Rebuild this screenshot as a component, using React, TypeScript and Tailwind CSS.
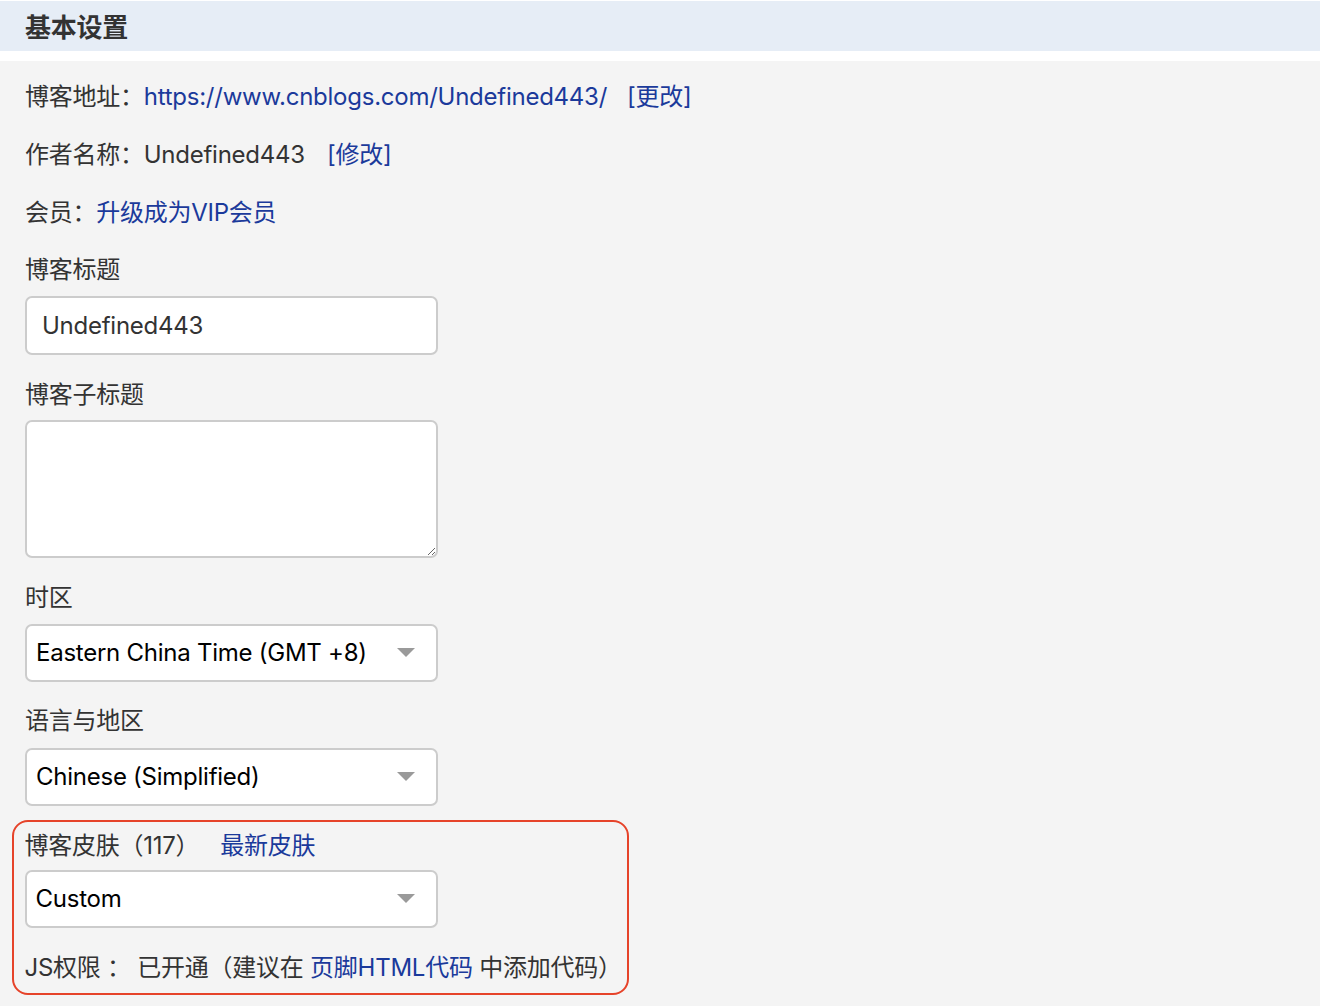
import React from "react";

const linkCls = "text-[#1b3a9b]";

const Caret: React.FC = () => (
  <svg width="18" height="10" viewBox="0 0 18 10" className="shrink-0">
    <path d="M0 0 L18 0 L9 9 Z" fill="#9a9a9a" />
  </svg>
);

const SelectBox: React.FC<{ value: string }> = ({ value }) => (
  <div className="flex h-[58px] w-[413px] items-center justify-between rounded-[7px] border-2 border-[#cccccc] bg-white pl-[9px] pr-[21px] text-black">
    <span>{value}</span>
    <Caret />
  </div>
);

const App: React.FC = () => {
  return (
    <div
      className="min-h-screen bg-[#f4f4f4] text-[24px] tracking-[-0.25px] text-[#333333]"
      style={{ fontFamily: 'Inter, "Noto Sans CJK SC", sans-serif' }}
    >
      <div className="h-px bg-white" />
      <div className="flex h-[50px] items-center bg-[#e6edf6] px-[25px] pt-[3px] text-[26px] font-bold text-[#333333]">
        基本设置
      </div>
      <div className="h-[10px] bg-white" />

      <div className="flex flex-col px-[25px] pt-[20px]">
        <div className="mb-[26px] h-[32px] leading-[32px]">
          博客地址：
          <span className={linkCls}>https://www.cnblogs.com/Undefined443/</span>
          <span className={`${linkCls} ml-[20px]`}>[更改]</span>
        </div>
        <div className="mb-[26px] h-[32px] leading-[32px]">
          作者名称：Undefined443
          <span className={`${linkCls} ml-[22px]`}>[修改]</span>
        </div>
        <div className="mb-[25px] h-[32px] leading-[32px]">
          会员：<span className={linkCls}>升级成为VIP会员</span>
        </div>

        <div className="mb-[10px] h-[32px] leading-[32px]">博客标题</div>
        <input
          defaultValue="Undefined443"
          className="mb-[24px] h-[59px] w-[413px] rounded-[7px] border-2 border-[#cccccc] bg-white px-[15px] text-[#333333] outline-none"
        />

        <div className="mb-[9px] h-[32px] leading-[32px]">博客子标题</div>
        <textarea className="mb-[24px] h-[138px] w-[413px] rounded-[7px] border-2 border-[#cccccc] bg-white outline-none" />

        <div className="mb-[10px] h-[32px] leading-[32px]">时区</div>
        <div className="mb-[23px]">
          <SelectBox value="Eastern China Time (GMT +8)" />
        </div>

        <div className="mb-[11px] h-[32px] leading-[32px]">语言与地区</div>
        <SelectBox value="Chinese (Simplified)" />

        <div className="mt-[14px] ml-[-13px] w-[617px] rounded-[16px] border-[2.5px] border-[#e6432a] pl-[10.5px] pt-[7.5px] pb-[9px]">
          <div className="mb-[8px] h-[32px] leading-[32px]">
            博客皮肤（117）<span className={`${linkCls} ml-[21px]`}>最新皮肤</span>
          </div>
          <SelectBox value="Custom" />
          <div className="mt-[24px] h-[32px] leading-[32px]">
            JS权限 ： 已开通（建议在 <span className={linkCls}>页脚HTML代码</span> 中添加代码）
          </div>
        </div>
      </div>
    </div>
  );
};

export default App;
